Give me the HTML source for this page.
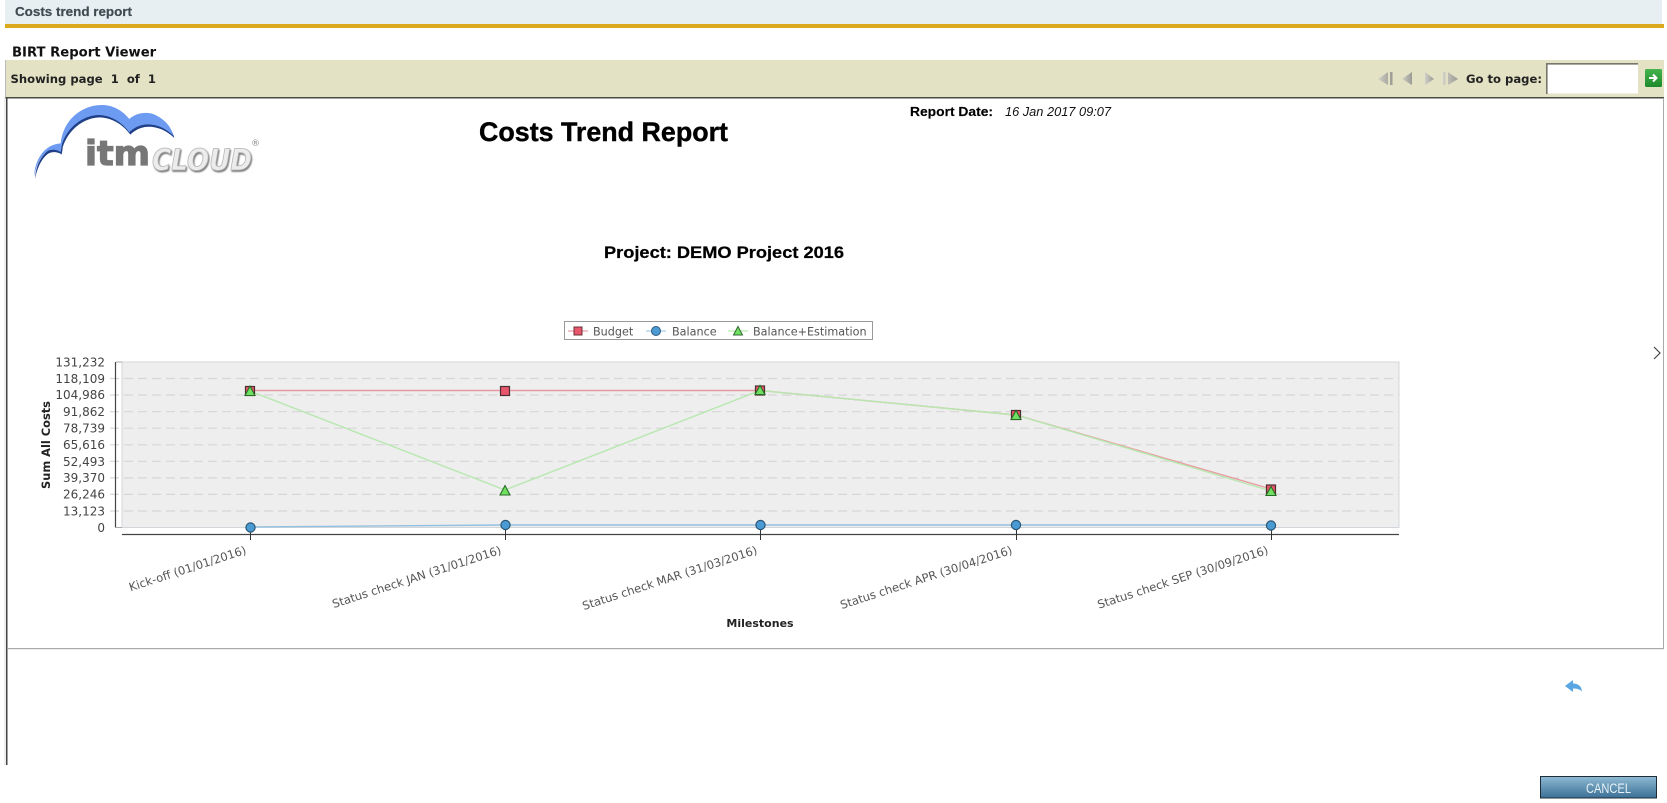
<!DOCTYPE html>
<html><head><meta charset="utf-8"><title>Costs trend report</title>
<style>
html,body{margin:0;padding:0;background:#fff;width:1667px;height:803px;overflow:hidden}
svg{position:absolute;left:0;top:0;display:block;filter:blur(.35px)}
text{font-family:"DejaVu Sans",sans-serif;white-space:pre}
.b{font-weight:bold}
.t{font-size:12px;fill:#444;text-anchor:end}
.x{font-size:11.55px;fill:#555;text-anchor:end}
.l{font-size:11.2px;fill:#555}
.g{stroke:#d6d6d6;stroke-width:1.2;stroke-dasharray:9 5}
</style></head><body>
<svg width="1667" height="803" viewBox="0 0 1667 803">
<defs>
<linearGradient id="btn" x1="0" y1="0" x2="0" y2="1"><stop offset="0" stop-color="#8fbad3"/><stop offset="1" stop-color="#3a6f95"/></linearGradient>
<linearGradient id="go" x1="0" y1="0" x2="0" y2="1"><stop offset="0" stop-color="#46b44c"/><stop offset="1" stop-color="#1c8a2c"/></linearGradient>
<linearGradient id="nav" x1="0" y1="0" x2="1" y2="0"><stop offset="0" stop-color="#d0d0c8"/><stop offset="1" stop-color="#9a9a94"/></linearGradient>
<filter id="sh" x="-10%" y="-10%" width="125%" height="130%"><feDropShadow dx="1" dy="1.500" stdDeviation=".7" flood-color="#777"/></filter>
</defs>

<!-- header -->
<rect x="5" y="0" width="1657" height="24" fill="#e8eff3"/>
<rect x="5" y="24" width="1659" height="4" fill="#dba81e"/>
<text x="15" y="16" class="b" textLength="117" lengthAdjust="spacingAndGlyphs" style="font-family:'Liberation Sans',sans-serif;font-size:13px;fill:#3f4b50;stroke:#3f4b50;stroke-width:.2">Costs trend report</text>
<text x="12" y="56.500" class="b" style="font-size:13.2px;fill:#111">BIRT Report Viewer</text>

<!-- toolbar -->
<rect x="5" y="60" width="1659" height="37" fill="#e3e2c4"/>
<rect x="5" y="97" width="1659" height="1.500" fill="#4a4a44"/>
<text x="10.500" y="83" class="b" style="font-size:11.6px;fill:#222">Showing page  1  of  1</text>
<g fill="url(#nav)">
<path d="M1378 79 L1388 72 V85 Z M1390 72 h2.500 v13 h-2.500 Z"/>
<path d="M1402 79 L1412 72 V85 Z"/>
<path d="M1425 72 L1434 79 L1425 85 Z"/>
<path d="M1443 72 h2.500 v13 h-2.500 Z M1448 72 L1458 79 L1448 85 Z"/>
</g>
<text x="1466" y="83" class="b" style="font-size:11.6px;fill:#222">Go to page:</text>
<rect x="1546" y="63.500" width="92" height="30" fill="#fff"/>
<path d="M1546.800 94 V63.800 H1638" fill="none" stroke="#77776c" stroke-width="1.600"/>
<rect x="1645" y="69" width="17" height="18" rx="1.500" fill="url(#go)"/>
<path d="M1649 78 h7 M1653 74.500 l3.500 3.500 l-3.500 3.500" fill="none" stroke="#fff" stroke-width="2"/>

<!-- report frame -->
<rect x="5" y="60" width="1" height="37" fill="#bbb"/>
<rect x="6" y="97" width="1.500" height="668" fill="#444"/>
<rect x="4.500" y="97" width="1" height="668" fill="#ddd"/>
<rect x="1663" y="98" width="1" height="550" fill="#aaa"/>
<rect x="7" y="648" width="1657" height="1.200" fill="#a8a8a8"/>

<!-- logo -->
<g transform="translate(20,95) scale(.3333)">
<path transform="translate(3,7)" d="M42 245 C45 190 75 148 122 145 C130 70 190 28 250 30 C285 32 310 50 328 72 C350 52 385 48 410 62 C440 78 455 100 460 122 C430 92 390 82 360 92 C345 97 335 105 328 112 C305 80 270 60 235 60 C185 62 140 100 125 150 C125 158 122 170 122 172 C115 165 95 160 80 170 C60 185 48 215 42 245 Z" fill="#1f3f86"/>
<path d="M42 245 C45 190 75 148 122 145 C130 70 190 28 250 30 C285 32 310 50 328 72 C350 52 385 48 410 62 C440 78 455 100 460 122 C430 92 390 82 360 92 C345 97 335 105 328 112 C305 80 270 60 235 60 C185 62 140 100 125 150 C125 158 122 170 122 172 C115 165 95 160 80 170 C60 185 48 215 42 245 Z" fill="#6e9bf2"/>
</g>
<text x="85" y="165" class="b" textLength="65" lengthAdjust="spacingAndGlyphs" style="font-size:34px;fill:#777;stroke:#777;stroke-width:1.200">itm</text>
<text x="152" y="170" class="b" textLength="100" lengthAdjust="spacingAndGlyphs" filter="url(#sh)" style="font-style:italic;font-size:29px;fill:#ececec;stroke:#b4b4b4;stroke-width:.8">CLOUD</text>
<text x="251" y="146" style="font-size:9px;fill:#888">®</text>

<!-- titles -->
<text x="479" y="141" class="b" textLength="249" lengthAdjust="spacingAndGlyphs" style="font-family:'Liberation Sans',sans-serif;font-size:27px;fill:#000;stroke:#000;stroke-width:.4">Costs Trend Report</text>
<text x="910" y="116" class="b" textLength="83" lengthAdjust="spacingAndGlyphs" style="font-family:'Liberation Sans',sans-serif;font-size:13px;fill:#000;stroke:#000;stroke-width:.15">Report Date:</text>
<text x="1005" y="116" textLength="106" lengthAdjust="spacingAndGlyphs" style="font-family:'Liberation Sans',sans-serif;font-style:italic;font-size:12.6px;fill:#111">16 Jan 2017 09:07</text>
<text x="604" y="258" class="b" textLength="240" lengthAdjust="spacingAndGlyphs" style="font-family:'Liberation Sans',sans-serif;font-size:17px;fill:#000;stroke:#000;stroke-width:.25">Project: DEMO Project 2016</text>

<!-- legend -->
<rect x="564.500" y="321.500" width="308" height="18" fill="#fff" stroke="#999"/>
<path d="M568 331 h20" stroke="#e8a0a8" stroke-width="1.200"/>
<rect x="574" y="327" width="8" height="8" fill="#e8566c" stroke="#6a3038"/>
<text x="593" y="335.500" class="l">Budget</text>
<path d="M646 331 h20" stroke="#a8cfe8" stroke-width="1.200"/>
<circle cx="656" cy="331" r="4.500" fill="#4a9ad4" stroke="#2f5a7c"/>
<text x="672" y="335.500" class="l">Balance</text>
<path d="M728 331 h20" stroke="#b8ecb0" stroke-width="1.200"/>
<path d="M738 326.500 L742.500 335 H733.500 Z" fill="#6fe060" stroke="#2f6a30"/>
<text x="753" y="335.500" class="l">Balance+Estimation</text>

<!-- plot -->
<rect x="122" y="362" width="1277" height="165.500" fill="#eeeeee" stroke="#d2d6da"/>
<g class="g">
<path d="M110 378.500H1399"/><path d="M110 395H1399"/><path d="M110 411.700H1399"/><path d="M110 428.200H1399"/><path d="M110 444.800H1399"/><path d="M110 461.300H1399"/><path d="M110 477.900H1399"/><path d="M110 494.400H1399"/><path d="M110 511H1399"/>
</g>
<path d="M115.500 362 V527.500" stroke="#444" stroke-width="1.200"/>
<path d="M116 362h6M116 527.500h6" stroke="#aaa"/>
<path d="M122 534.500 H1399" stroke="#444" stroke-width="1.200"/>
<g stroke="#333" stroke-width="1">
<path d="M250.500 528V540M505.500 528V540M760.500 528V540M1016.500 528V540M1271.500 528V540"/>
</g>
<g class="t">
<text x="105" y="366.500">131,232</text><text x="105" y="383">118,109</text><text x="105" y="399">104,986</text><text x="105" y="416">91,862</text><text x="105" y="432.500">78,739</text><text x="105" y="449">65,616</text><text x="105" y="466">52,493</text><text x="105" y="482">39,370</text><text x="105" y="498.500">26,246</text><text x="105" y="515.500">13,123</text><text x="105" y="532">0</text>
</g>
<text transform="translate(50,445) rotate(-90)" class="b" text-anchor="middle" style="font-size:11.400px;fill:#222">Sum All Costs</text>
<text x="760" y="627" class="b" text-anchor="middle" style="font-size:11px;fill:#222">Milestones</text>

<!-- series -->
<polyline points="250,390.500 505,390.500 760,390.500 1016,415 1271,489" fill="none" stroke="#e89aa2" stroke-width="1.400"/>
<polyline points="250,391 505,490 760,390.500 1016,415 1271,491" fill="none" stroke="#b6e8ae" stroke-width="1.400"/>
<polyline points="250,527 505,525 760,525 1016,525 1271,525" fill="none" stroke="#92c0e0" stroke-width="1.400"/>
<g fill="#e8566c" stroke="#4a3030" stroke-width="1.200">
<rect x="245.500" y="386.500" width="9" height="9"/><rect x="500.500" y="386.500" width="9" height="9"/><rect x="755.500" y="386" width="9" height="9"/><rect x="1011.500" y="410.500" width="9" height="9"/><rect x="1266.500" y="485" width="9" height="9"/>
</g>
<g fill="#4a9ad4" stroke="#2c5673" stroke-width="1.200">
<circle cx="250.500" cy="527.500" r="4.600"/><circle cx="505.500" cy="525" r="4.600"/><circle cx="760.500" cy="525" r="4.600"/><circle cx="1016" cy="525" r="4.600"/><circle cx="1271" cy="525.500" r="4.600"/>
</g>
<g fill="#70e060" stroke="#2a6a2a" stroke-width="1.100">
<path d="M250 386 L255 395.500 H245 Z"/><path d="M505 485.500 L510 495 H500 Z"/><path d="M760 385.500 L765 394.500 H755 Z"/><path d="M1016 410.500 L1021 419.500 H1011 Z"/><path d="M1271 486.500 L1276 495.500 H1266 Z"/>
</g>

<!-- x labels -->
<g class="x">
<text transform="translate(247,553.500) rotate(-18)">Kick-off (01/01/2016)</text>
<text transform="translate(502,553.500) rotate(-18)">Status check JAN (31/01/2016)</text>
<text transform="translate(758,553.500) rotate(-18)">Status check MAR (31/03/2016)</text>
<text transform="translate(1013,553.500) rotate(-18)">Status check APR (30/04/2016)</text>
<text transform="translate(1269,553.500) rotate(-18)">Status check SEP (30/09/2016)</text>
</g>

<!-- right chevron -->
<path d="M1654 347 L1660 353 L1654 359" fill="none" stroke="#444" stroke-width="1.200"/>

<!-- back arrow -->
<path d="M1565 686 L1573 680 V683.500 C1578 683.500 1581.500 686 1582 691.500 C1579.500 689 1576.500 688.500 1573 688.500 V692 Z" fill="#5aa6e2"/>

<!-- cancel -->
<rect x="1540.500" y="776.500" width="116" height="21.500" fill="url(#btn)" stroke="#1d2c38"/>
<text x="1586" y="793" textLength="45" lengthAdjust="spacingAndGlyphs" style="font-family:'Liberation Sans',sans-serif;font-size:13.5px;fill:#e8f2f8">CANCEL</text>
</svg>
</body></html>
